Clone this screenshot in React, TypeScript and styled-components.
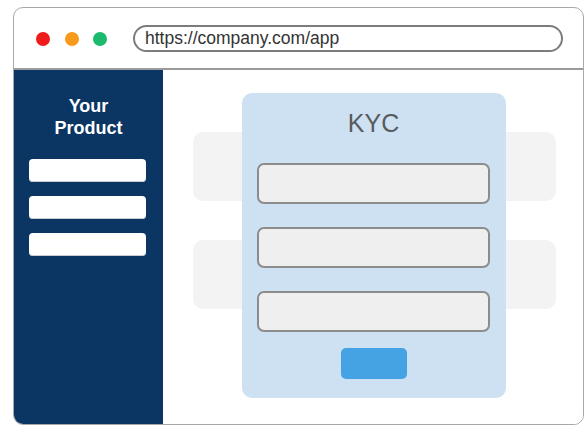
import styled, { createGlobalStyle } from "styled-components";

const GlobalStyle = createGlobalStyle`
  html, body {
    margin: 0;
    padding: 0;
    background: #ffffff;
  }

  body {
    font-family: "Liberation Sans", Arial, sans-serif;
  }
`;

const lights = ["#ee1c1c", "#f89a1c", "#1cba6c"];

const App = () => {
  return (
    <Page>
      <GlobalStyle />
      <BrowserWindow>
        <TitleBar>
          <Lights>
            {lights.map((color) => (
              <Light key={color} color={color} />
            ))}
          </Lights>
          <AddressBar>https://company.com/app</AddressBar>
        </TitleBar>

        <WindowBody>
          <Sidebar>
            <ProductName>
              Your
              <br />
              Product
            </ProductName>
            <NavList>
              <NavItem />
              <NavItem />
              <NavItem />
            </NavList>
          </Sidebar>

          <Content>
            <Placeholders>
              <Placeholder />
              <Placeholder />
            </Placeholders>

            <KycCard>
              <KycTitle>KYC</KycTitle>
              <Fields>
                <Field />
                <Field />
                <Field />
              </Fields>
              <SubmitButton />
            </KycCard>
          </Content>
        </WindowBody>
      </BrowserWindow>
    </Page>
  );
};

export default App;

const Page = styled.div`
  width: 587px;
  height: 426px;
  box-sizing: border-box;
  padding: 7px 3px 0 13px;
  overflow: hidden;
`;

const BrowserWindow = styled.div`
  width: 571px;
  height: 418px;
  box-sizing: border-box;
  border: 1.5px solid #a8a8a8;
  border-radius: 10px;
  overflow: hidden;
  display: flex;
  flex-direction: column;
  background: #ffffff;
`;

const TitleBar = styled.div`
  height: 62px;
  flex-shrink: 0;
  display: flex;
  align-items: center;
  padding: 0 20px 0 22px;
  gap: 26px;
  border-bottom: 2px solid #9a9a9a;
  box-sizing: border-box;
`;

const Lights = styled.div`
  display: flex;
  gap: 14.5px;
  margin-top: 1px;
`;

const Light = styled.span<{ color: string }>`
  width: 14px;
  height: 14px;
  border-radius: 50%;
  background: ${(props) => props.color};
`;

const AddressBar = styled.div`
  flex: 1;
  height: 27px;
  box-sizing: border-box;
  border: 2px solid #7c7c7c;
  border-radius: 14px;
  display: flex;
  align-items: center;
  padding-left: 10px;
  font-size: 17.5px;
  color: #333333;
`;

const WindowBody = styled.div`
  flex: 1;
  display: flex;
`;

const Sidebar = styled.div`
  width: 149px;
  flex-shrink: 0;
  background: #0b3563;
  display: flex;
  flex-direction: column;
  align-items: center;
  padding-top: 25px;
  box-sizing: border-box;
`;

const ProductName = styled.div`
  color: #ffffff;
  font-weight: bold;
  font-size: 18px;
  line-height: 22px;
  text-align: center;
`;

const NavList = styled.div`
  display: flex;
  flex-direction: column;
  gap: 14px;
  margin-top: 20px;
  margin-right: 3px;
`;

const NavItem = styled.div`
  width: 117px;
  height: 23px;
  border-radius: 4px;
  background: #ffffff;
  box-shadow: inset 0 -1px 0 #c9ccd2;
`;

const Content = styled.div`
  flex: 1;
  display: grid;
  background: #ffffff;

  & > * {
    grid-area: 1 / 1;
  }
`;

const Placeholders = styled.div`
  display: flex;
  flex-direction: column;
  gap: 39px;
  padding: 62px 27px 0 30px;
`;

const Placeholder = styled.div`
  height: 69px;
  border-radius: 10px;
  background: #f3f3f3;
`;

const KycCard = styled.div`
  justify-self: start;
  align-self: start;
  margin: 23px 0 0 79px;
  width: 264px;
  height: 305px;
  box-sizing: border-box;
  border-radius: 10px;
  background: #cde1f2;
  display: flex;
  flex-direction: column;
  align-items: center;
  padding: 15px 16px 0 15px;
`;

const KycTitle = styled.div`
  font-size: 25px;
  line-height: 30px;
  color: #585b60;
`;

const Fields = styled.div`
  align-self: stretch;
  display: flex;
  flex-direction: column;
  gap: 23px;
  margin-top: 25px;
`;

const Field = styled.div`
  height: 41px;
  box-sizing: border-box;
  border: 2px solid #8c8c8c;
  border-radius: 7px;
  background: #efefef;
`;

const SubmitButton = styled.div`
  width: 66px;
  height: 31px;
  margin-top: 16px;
  border-radius: 5px;
  background: #45a3e3;
`;
